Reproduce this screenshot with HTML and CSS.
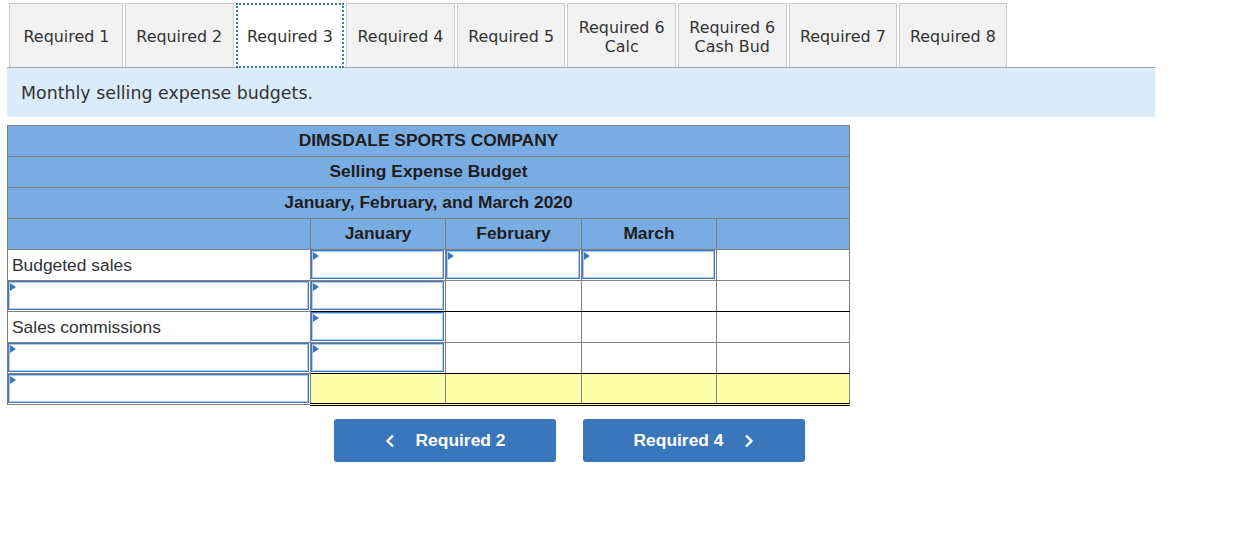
FILE: index.html
```html
<!DOCTYPE html>
<html>
<head>
<meta charset="utf-8">
<link rel="stylesheet" href="styles.css">
</head>
<body>
<div class="page">
  <div class="tabs">
    <div class="tab tab-first">Required 1</div>
    <div class="tab">Required 2</div>
    <div class="tab tab-active">Required 3</div>
    <div class="tab">Required 4</div>
    <div class="tab">Required 5</div>
    <div class="tab">Required 6<br>Calc</div>
    <div class="tab">Required 6<br>Cash Bud</div>
    <div class="tab">Required 7</div>
    <div class="tab tab-last">Required 8</div>
  </div>
  <div class="banner">Monthly selling expense budgets.</div>

  <table class="budget">
    <colgroup>
      <col class="c-label">
      <col class="c-num">
      <col class="c-num2">
      <col class="c-num">
      <col class="c-num3">
    </colgroup>
    <thead>
      <tr><th colspan="5">DIMSDALE SPORTS COMPANY</th></tr>
      <tr><th colspan="5">Selling Expense Budget</th></tr>
      <tr><th colspan="5">January, February, and March 2020</th></tr>
      <tr><th></th><th>January</th><th>February</th><th>March</th><th></th></tr>
    </thead>
    <tbody>
      <tr>
        <td class="label">Budgeted sales</td>
        <td class="in"><div class="field"></div></td>
        <td class="in"><div class="field"></div></td>
        <td class="in"><div class="field"></div></td>
        <td></td>
      </tr>
      <tr>
        <td class="in"><div class="field"></div></td>
        <td class="in ul"><div class="field"></div></td>
        <td class="ul"></td>
        <td class="ul"></td>
        <td class="ul"></td>
      </tr>
      <tr>
        <td class="label">Sales commissions</td>
        <td class="in"><div class="field"></div></td>
        <td></td>
        <td></td>
        <td></td>
      </tr>
      <tr>
        <td class="in"><div class="field"></div></td>
        <td class="in ul"><div class="field"></div></td>
        <td class="ul"></td>
        <td class="ul"></td>
        <td class="ul"></td>
      </tr>
      <tr>
        <td class="in"><div class="field"></div></td>
        <td class="total"></td>
        <td class="total"></td>
        <td class="total"></td>
        <td class="total"></td>
      </tr>
    </tbody>
  </table>

  <div class="nav">
    <button class="btn">
      <svg class="chev" width="10" height="14" viewBox="0 0 10 14"><path d="M8 1.5 L2.5 7 L8 12.5" fill="none" stroke="#fff" stroke-width="2.4"/></svg>
      <span>Required 2</span>
    </button>
    <button class="btn">
      <span>Required 4</span>
      <svg class="chev" width="10" height="14" viewBox="0 0 10 14"><path d="M2 1.5 L7.5 7 L2 12.5" fill="none" stroke="#fff" stroke-width="2.4"/></svg>
    </button>
  </div>
</div>
</body>
</html>
```

FILE: styles.css
```css
* { box-sizing: border-box; }
html, body { margin: 0; padding: 0; background: #fff; }
.page { padding: 3px 0 0 7px; }

.tabs {
  display: flex;
  gap: 2px;
  margin-left: 2px;
  height: 64px;
}
.tab {
  width: 108.6px;
  height: 64px;
  display: flex;
  align-items: center;
  justify-content: center;
  text-align: center;
  background: #f2f2f2;
  border: 1px solid #cbcbcb;
  border-bottom: none;
  font-family: "DejaVu Sans", Verdana, sans-serif;
  font-size: 15.9px;
  line-height: 19px;
  padding-top: 2px;
  color: #333;
}
.tab-first { width: 114px; padding-left: 1px; }
.tab-last { width: 107.5px; }
.tab-active {
  background: #fff;
  border: 2px dotted #3a76bb;
  height: 65px;
}

.banner {
  width: 1148px;
  height: 50px;
  border-top: 1px solid #a6a6a6;
  background: #daebf9;
  padding-left: 14px;
  display: flex;
  align-items: center;
  font-family: "DejaVu Sans", Verdana, sans-serif;
  font-size: 17.4px;
  color: #333;
}

.budget {
  margin-top: 8px;
  border-collapse: collapse;
  table-layout: fixed;
  width: 842px;
  font-family: "Liberation Sans", Arial, sans-serif;
  font-size: 17.4px;
}
.c-label { width: 303px; }
.c-num { width: 135px; }
.c-num2 { width: 136px; }
.c-num3 { width: 133px; }

.budget th {
  background: #7aace4;
  border: 1px solid #808080;
  height: 31px;
  padding: 0 0 1px;
  font-weight: bold;
  color: #1e1e1e;
  text-align: center;
}
.budget td {
  border: 1px solid #808080;
  height: 31px;
  padding: 0;
  color: #333;
  background: #fff;
}
.budget td.label { padding-left: 4px; }
.budget td.in { padding: 0 1px 1px 0; vertical-align: top; }
.field {
  position: relative;
  height: 29px;
  border: 1px solid #4379bd;
  box-shadow: inset 0 0 0 1px #aecbef;
  background: #fff;
}
.field::before {
  content: "";
  position: absolute;
  left: 1px;
  top: 1px;
  border-left: 6px solid #3a76bb;
  border-top: 4px solid transparent;
  border-bottom: 4px solid transparent;
}
.budget td.ul { border-bottom: 1px solid #000; }
.budget td.total {
  background: #ffffaa;
  border-top: 1px solid #000;
  border-bottom: 3px double #000;
}

.nav {
  display: flex;
  gap: 27px;
  margin-top: 13px;
  padding-left: 327px;
}
.btn {
  width: 222px;
  height: 43px;
  border: none;
  border-radius: 3px;
  background: #3a76bb;
  color: #fff;
  font-family: "Liberation Sans", Arial, sans-serif;
  font-weight: bold;
  font-size: 17.4px;
  display: flex;
  align-items: center;
  justify-content: center;
  gap: 21px;
  padding: 0;
}
.chev { display: block; }
```
